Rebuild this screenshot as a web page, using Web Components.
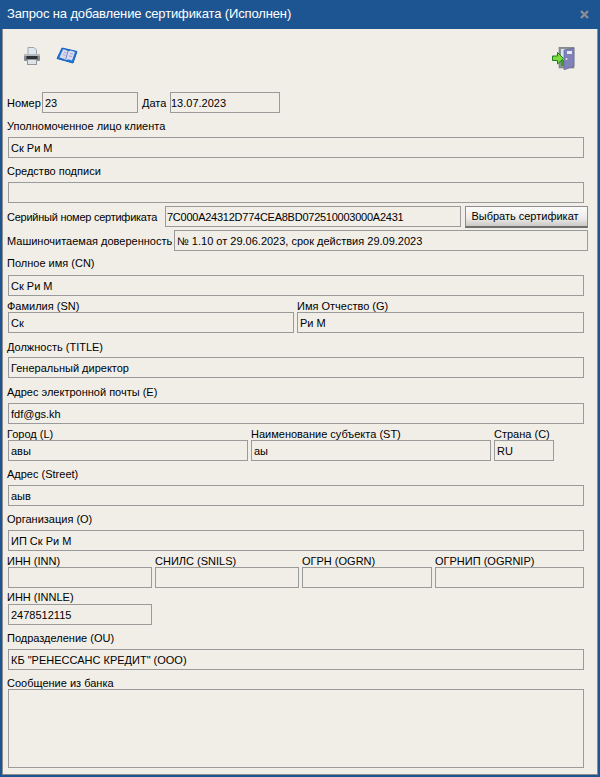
<!DOCTYPE html>
<html lang="ru">
<head>
<meta charset="utf-8">
<title>Запрос на добавление сертификата</title>
<style>
  html, body { margin: 0; padding: 0; }
  body { font: 11px/12px "Liberation Sans", Arial, sans-serif; color: #000; }
  .row { display: flex; align-items: flex-end; }
</style>
</head>
<body>
<template id="window-tpl">
  <style>
    :host {
      display: flex;
      flex-direction: column;
      width: 600px;
      height: 777px;
      box-sizing: border-box;
      background: #1d5592;
    }
    .title {
      flex: 0 0 29px;
      display: flex;
      align-items: center;
      justify-content: space-between;
      padding: 0 11px 1px 7px;
      box-sizing: border-box;
      color: #fff;
      font: 13px/16px "Liberation Sans", Arial, sans-serif;
      letter-spacing: -0.13px;
    }
    .close { display: block; width: 9px; height: 9px; margin-top: 1px; }
    .body {
      flex: 1;
      margin: 0 2px 2px;
      border: 1px solid #8e8e8e;
      border-top: 0;
      background: #f1eee8;
      padding: 0 9px 0 4px;
    }
    .tools {
      height: 63px;
      box-sizing: border-box;
      display: flex;
      align-items: flex-start;
    }
    ::slotted([slot="left"]) { display: flex; gap: 16px; margin: 18px 0 0 17px; }
    ::slotted([slot="right"]) { margin: 18px 13px 0 auto; }
  </style>
  <div class="title">
    <slot name="title"></slot>
    <svg class="close" viewBox="0 0 9 9"><path d="M1 1l7 7M8 1L1 8" stroke="#8b8f94" stroke-width="2.4" fill="none"/></svg>
  </div>
  <div class="body">
    <div class="tools"><slot name="left"></slot><slot name="right"></slot></div>
    <slot></slot>
  </div>
</template>

<template id="field-tpl">
  <style>
    :host { display: block; font: 11px/12px "Liberation Sans", Arial, sans-serif; color: #000; }
    :host([inline]) { display: flex; align-items: center; }
    .label { display: block; white-space: nowrap; height: 12px; margin-bottom: var(--gap, 0); }
    :host([inline]) .label { flex: 0 0 var(--label-w, 40px); margin: 0; }
    .box {
      box-sizing: border-box;
      height: var(--h, 21px);
      margin-left: var(--indent, 1px);
      border: 1px solid #9a9a9a;
      padding: 0 2px 0 var(--pad, 2px);
      line-height: 20px;
      white-space: nowrap;
      overflow: hidden;
    }
    :host([inline]) .box { flex: 1; margin-left: 0; }
  </style>
  <span class="label"></span>
  <div class="box"></div>
</template>

<template id="button-tpl">
  <style>
    :host { display: block; margin-left: 4px; }
    button {
      display: block;
      width: 123px;
      height: 22px;
      padding: 0 3px 1px 0;
      border: 1px solid #8d8d8d;
      border-bottom: 2px solid #6f6f6f;
      background: linear-gradient(#fbfbfa, #ecebe8 60%, #c9c8c5);
      font: 11px "Liberation Sans", Arial, sans-serif;
      color: #000;
    }
  </style>
  <button><slot></slot></button>
</template>

<request-window>
  <span slot="title">Запрос на добавление сертификата (Исполнен)</span>
  <div slot="left">
    <svg width="16" height="18" viewBox="0 0 16 18">
      <path d="M4 0.500h6l2.500 2.500v5H4z" fill="#dfe8ee" stroke="#9aa6ad"/>
      <path d="M1 7h14a1 1 0 0 1 1 1v5a1 1 0 0 1-1 1H1a1 1 0 0 1-1-1V8a1 1 0 0 1 1-1z" fill="#868c92"/>
      <rect x="0" y="7" width="16" height="2" fill="#b4babe"/>
      <rect x="2.500" y="9" width="11" height="3.500" fill="#2f3338"/>
      <rect x="3.500" y="12.500" width="9" height="5" fill="#dfe4e8" stroke="#8f979d" stroke-width="1"/>
    </svg>
    <svg width="22" height="17" viewBox="0 0 22 17">
      <path d="M6 1L21 4.500 17 16 1 11.500z" fill="#1a78d8" stroke="#1a5fb4"/>
      <path d="M7 2.500c2 0 3.500 .5 5 2 1.500-1 3.500-1 7 .5l-3 8.500c-3-1.300-5-1.300-6.500-.5C8 11.500 6 11 3.500 10.500z" fill="#d9d9ef"/>
      <path d="M12 4.500L9.500 12.500" stroke="#7f86b8" fill="none"/>
      <path d="M8 5l2.500 1M7 7.500l2.500 1M14 6.500l3 .5M13 9l3 .5" stroke="#a6a8d2" fill="none"/>
    </svg>
  </div>
  <svg slot="right" width="23" height="23" viewBox="0 0 23 23">
    <rect x="7" y="0" width="15" height="21" fill="#8f9295" stroke="#77797c" stroke-width=".6"/>
    <rect x="9" y="2" width="5" height="17" fill="#cfe6f7"/>
    <rect x="9" y="13" width="4" height="6" fill="#39a02d"/>
    <path d="M12 3L22 1v18l-10 4z" fill="#7f81b8" stroke="#5f6193" stroke-width=".6"/>
    <rect x="15" y="4" width="5" height="3" fill="#e7e8f5"/>
    <circle cx="14.500" cy="12" r="1" fill="#e3e3e8"/>
    <path d="M0.500 9H5.500V5.500L11.500 11.500 5.500 17V13.500H0.500z" fill="#7edc3f" stroke="#1f7d1c"/>
  </svg>

  <div class="row" style="align-items:stretch">
    <form-field inline label="Номер" value="23" style="width:131px;--label-w:35px"></form-field>
    <form-field inline label="Дата" value="13.07.2023" style="width:138px;margin-left:4px;--label-w:28px;--pad:0"></form-field>
  </div>
  <form-field label="Уполномоченное лицо клиента" value="Ск Ри М" style="--gap:5px;margin-top:7px;width:577px"></form-field>
  <form-field label="Средство подписи" value="" style="--gap:5px;margin-top:7px;width:577px"></form-field>
  <div class="row" style="margin-top:3px;align-items:flex-start">
    <form-field inline label="Серийный номер сертификата" value="7C000A24312D774CEA8BD072510003000A2431" style="width:454px;--label-w:158px;--pad:1px;letter-spacing:-0.25px"></form-field>
    <form-button>Выбрать сертификат</form-button>
  </div>
  <form-field inline label="Машиночитаемая доверенность" value="№ 1.10 от 29.06.2023, срок действия 29.09.2023" style="margin-top:2px;width:581px;--label-w:167px"></form-field>
  <form-field label="Полное имя (CN)" value="Ск Ри М" style="--gap:6px;margin-top:6px;width:577px"></form-field>
  <div class="row" style="margin-top:4px">
    <form-field label="Фамилия (SN)" value="Ск" style="width:287px"></form-field>
    <form-field label="Имя Отчество (G)" value="Ри М" style="width:287px;margin-left:3px;--indent:0"></form-field>
  </div>
  <form-field label="Должность (TITLE)" value="Генеральный директор" style="--gap:4px;margin-top:8px;width:577px"></form-field>
  <form-field label="Адрес электронной почты (E)" value="fdf@gs.kh" style="--gap:5px;margin-top:8px;width:577px"></form-field>
  <div class="row" style="margin-top:4px">
    <form-field label="Город (L)" value="авы" style="width:241px"></form-field>
    <form-field label="Наименование субъекта (ST)" value="аы" style="width:240px;margin-left:3px;--indent:0"></form-field>
    <form-field label="Страна (C)" value="RU" style="width:60px;margin-left:3px;--indent:0"></form-field>
  </div>
  <form-field label="Адрес (Street)" value="аыв" style="--gap:5px;margin-top:7px;width:577px"></form-field>
  <form-field label="Организация (O)" value="ИП Ск Ри М" style="--gap:5px;margin-top:7px;width:577px"></form-field>
  <div class="row" style="margin-top:4px">
    <form-field label="ИНН (INN)" value="" style="width:145px"></form-field>
    <form-field label="СНИЛС (SNILS)" value="" style="width:144px;margin-left:3px;--indent:0"></form-field>
    <form-field label="ОГРН (OGRN)" value="" style="width:130px;margin-left:3px;--indent:0"></form-field>
    <form-field label="ОГРНИП (OGRNIP)" value="" style="width:149px;margin-left:3px;--indent:0"></form-field>
  </div>
  <form-field label="ИНН (INNLE)" value="2478512115" style="--gap:1px;margin-top:3px;width:145px"></form-field>
  <form-field label="Подразделение (OU)" value='КБ "РЕНЕССАНС КРЕДИТ" (ООО)' style="--gap:5px;margin-top:7px;width:577px"></form-field>
  <form-field label="Сообщение из банка" value="" style="--h:79px;margin-top:7px;width:577px"></form-field>
</request-window>

<script>
  function shadowFrom(el, id) {
    const root = el.attachShadow({ mode: 'open' });
    root.appendChild(document.getElementById(id).content.cloneNode(true));
    return root;
  }

  class RequestWindow extends HTMLElement {
    constructor() {
      super();
      shadowFrom(this, 'window-tpl');
    }
  }

  class FormField extends HTMLElement {
    constructor() {
      super();
      shadowFrom(this, 'field-tpl');
    }

    connectedCallback() {
      this.shadowRoot.querySelector('.label').textContent = this.getAttribute('label');
      this.shadowRoot.querySelector('.box').textContent = this.getAttribute('value');
    }
  }

  class FormButton extends HTMLElement {
    constructor() {
      super();
      shadowFrom(this, 'button-tpl');
    }
  }

  customElements.define('request-window', RequestWindow);
  customElements.define('form-field', FormField);
  customElements.define('form-button', FormButton);
</script>
</body>
</html>
